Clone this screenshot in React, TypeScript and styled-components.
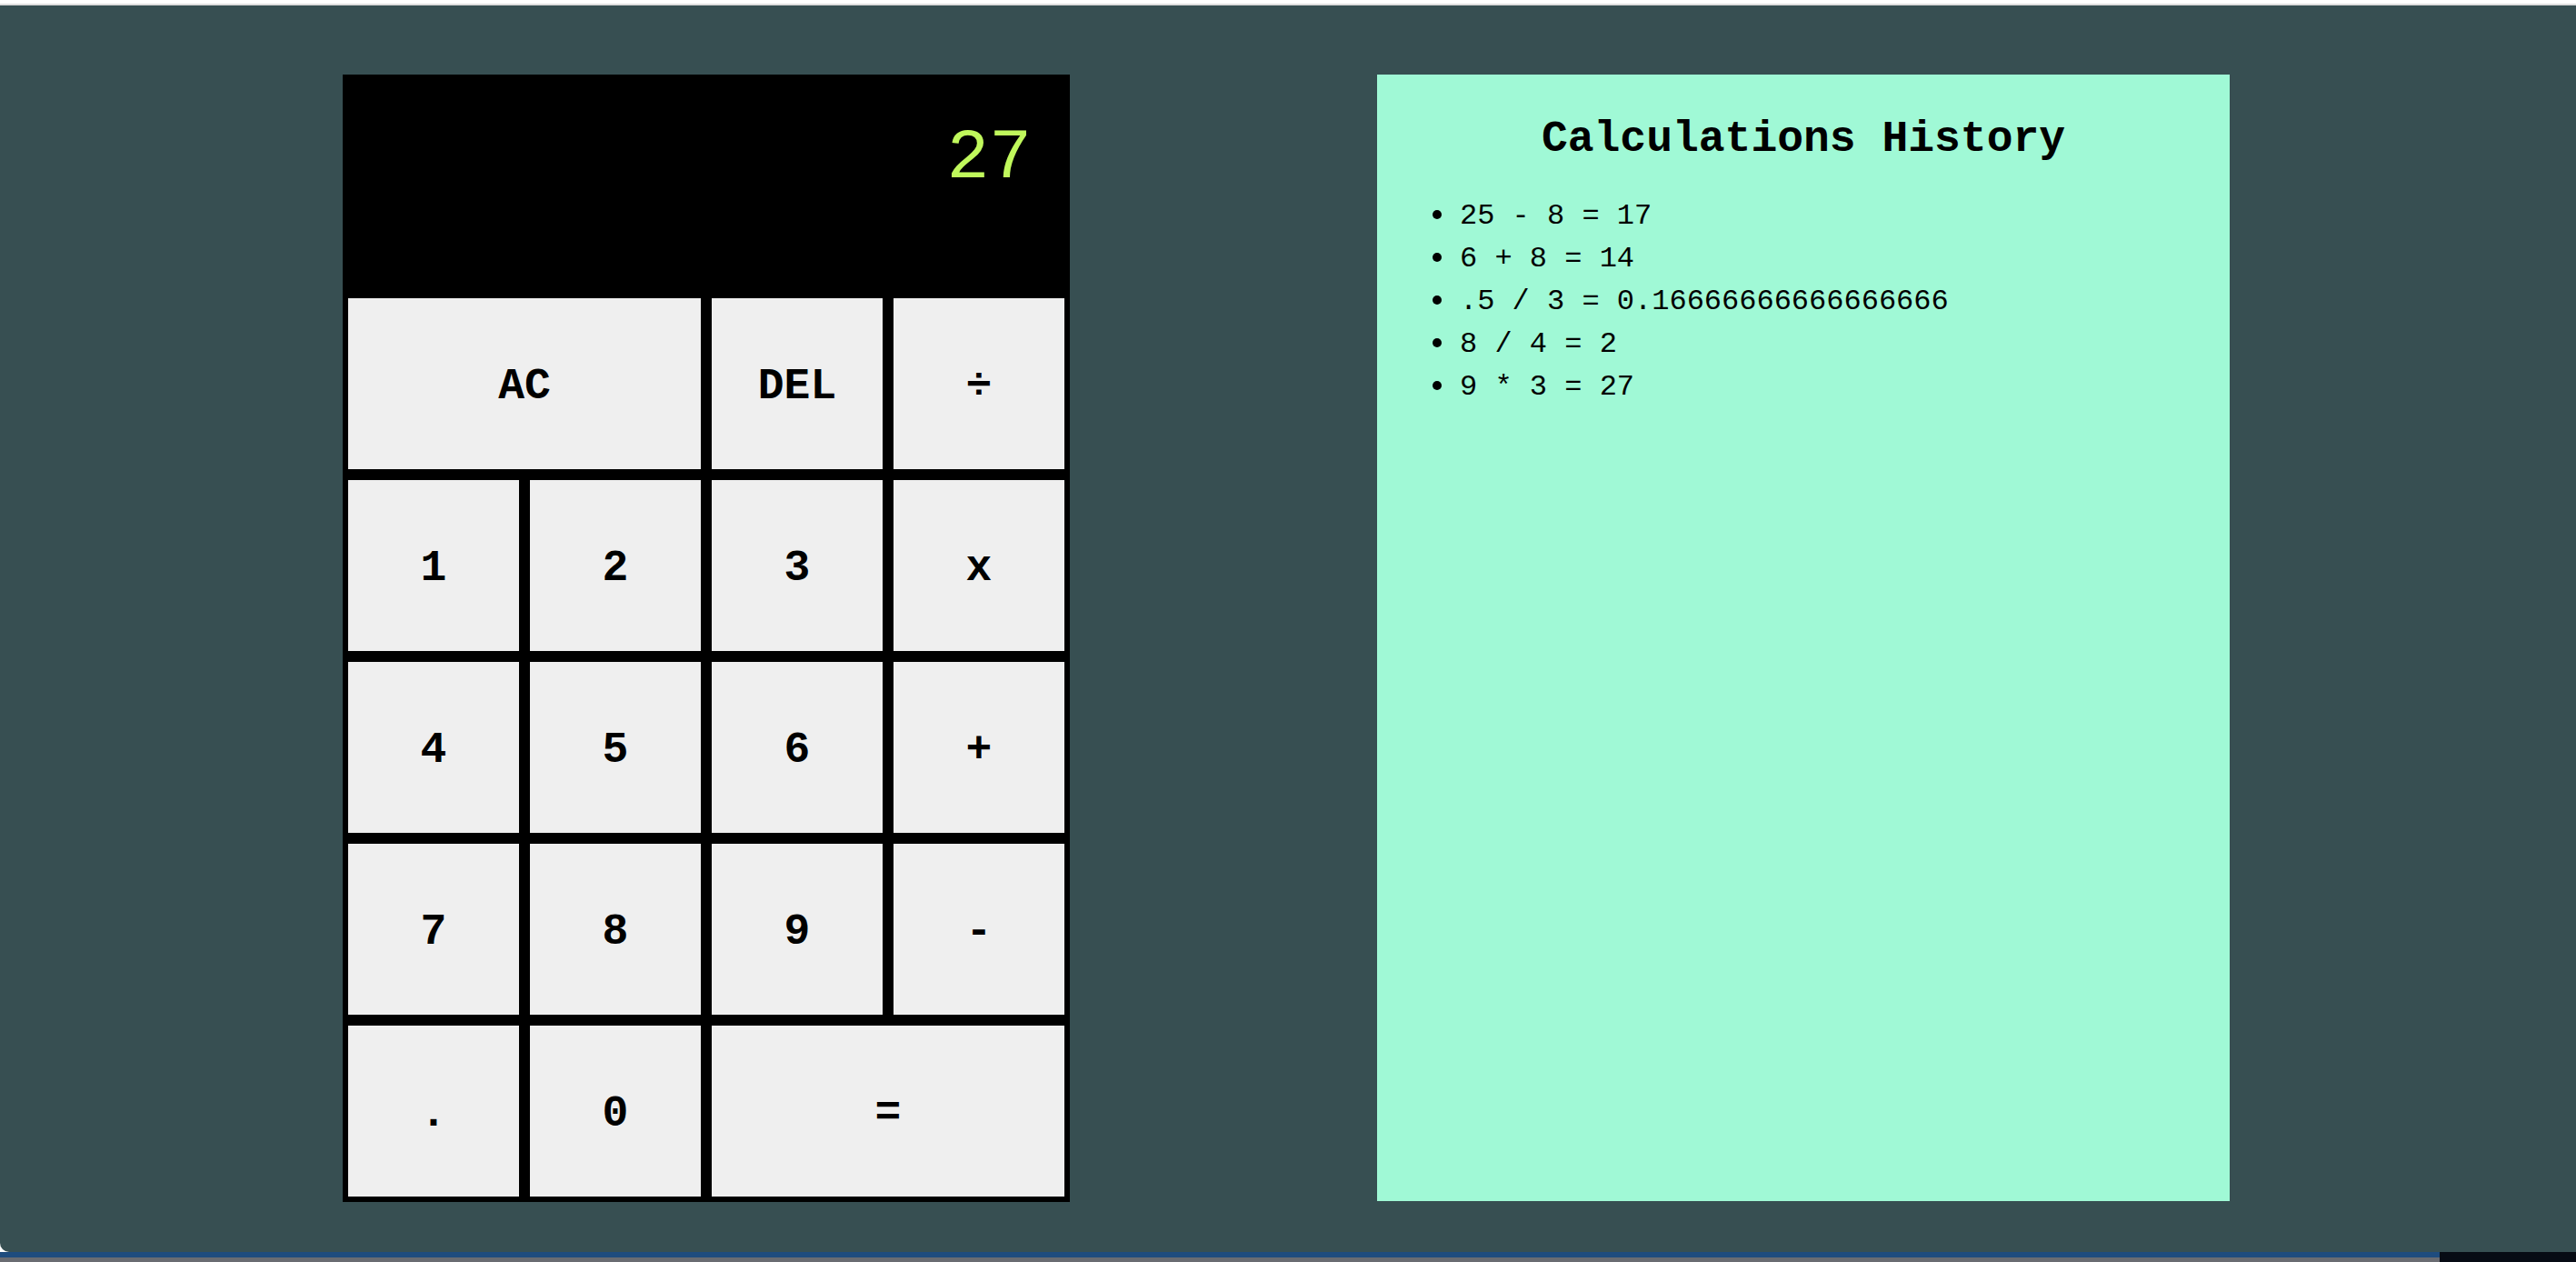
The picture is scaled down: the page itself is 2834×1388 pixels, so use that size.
import React from "react";
import styled, { createGlobalStyle } from "styled-components";

const GlobalStyle = createGlobalStyle`
  html, body {
    margin: 0;
    padding: 0;
    background: #ffffff;
    overflow: hidden;
  }
  * { box-sizing: border-box; }
`;

const Screen = styled.div`
  width: 2834px;
  height: 1388px;
  display: flex;
  flex-direction: column;
  padding-top: 4px;
  background: #ffffff;
`;

const Page = styled.main`
  flex: 0 0 1373px;
  display: flex;
  align-items: flex-start;
  gap: 338px;
  padding: 76px 0 0 377px;
  background: #374f52;
  border-top: 2px solid #dedede;
  border-bottom-left-radius: 10px;
`;

const Dock = styled.div`
  flex: 1;
  display: flex;
  flex-direction: column;
  background: #0a0f1a;
`;

const DockBlue = styled.div`
  height: 6px;
  display: flex;
`;

const BlueBar = styled.div`
  flex: 1;
  background: #1f4c7e;
`;

const DarkBar = styled.div`
  width: 150px;
  background: #070b14;
`;

const DockGray = styled.div`
  flex: 1;
  display: flex;
`;

const GrayBar = styled.div`
  flex: 1;
  background: #6a6c72;
`;

const Calculator = styled.div`
  display: grid;
  grid-template-columns: repeat(4, 200px);
  grid-template-rows: 240px repeat(5, 200px);
  background: #000000;
`;

const Display = styled.div`
  grid-column: 1 / -1;
  display: flex;
  justify-content: flex-end;
  align-items: flex-start;
  padding: 48px 42px 0 0;
  background: #000000;
  color: #c0f85c;
  font-family: "Liberation Mono", monospace;
  font-size: 78px;
  line-height: normal;
`;

const Key = styled.button<{ $span?: number }>`
  grid-column: span ${(p) => p.$span ?? 1};
  margin: 0;
  padding: 5px 0 0;
  border: 6px solid #000000;
  border-radius: 0;
  background: #efefef;
  color: #000000;
  font-family: "Liberation Mono", monospace;
  font-weight: 700;
  font-size: 48px;
  cursor: pointer;
`;

const HistoryPanel = styled.section`
  width: 938px;
  height: 1239px;
  display: flex;
  flex-direction: column;
  padding: 44px 0 0 61px;
  background: #a0f9d6;
  color: #000000;
`;

const Title = styled.h2`
  margin: 0 0 34px -61px;
  text-align: center;
  font-family: "Liberation Mono", monospace;
  font-weight: 700;
  font-size: 48px;
  line-height: normal;
`;

const List = styled.ul`
  margin: 0;
  padding: 0;
  list-style: none;
  display: flex;
  flex-direction: column;
`;

const Item = styled.li`
  display: flex;
  align-items: center;
  gap: 20px;
  font-family: "Liberation Mono", monospace;
  font-size: 32px;
  line-height: 47px;
  white-space: pre;
`;

const Dot = styled.span`
  width: 10px;
  height: 10px;
  border-radius: 50%;
  background: #000000;
  margin-top: -4px;
`;

const keys: { label: string; span?: number }[] = [
  { label: "AC", span: 2 },
  { label: "DEL" },
  { label: "÷" },
  { label: "1" },
  { label: "2" },
  { label: "3" },
  { label: "x" },
  { label: "4" },
  { label: "5" },
  { label: "6" },
  { label: "+" },
  { label: "7" },
  { label: "8" },
  { label: "9" },
  { label: "-" },
  { label: "." },
  { label: "0" },
  { label: "=", span: 2 },
];

const history = [
  "25 - 8 = 17",
  "6 + 8 = 14",
  ".5 / 3 = 0.16666666666666666",
  "8 / 4 = 2",
  "9 * 3 = 27",
];

export default function App() {
  return (
    <>
      <GlobalStyle />
      <Screen>
        <Page>
          <Calculator>
            <Display>27</Display>
            {keys.map((k) => (
              <Key key={k.label} $span={k.span}>
                {k.label}
              </Key>
            ))}
          </Calculator>
          <HistoryPanel>
            <Title>Calculations History</Title>
            <List>
              {history.map((h) => (
                <Item key={h}>
                  <Dot />
                  {h}
                </Item>
              ))}
            </List>
          </HistoryPanel>
        </Page>
        <Dock>
          <DockBlue>
            <BlueBar />
            <DarkBar />
          </DockBlue>
          <DockGray>
            <GrayBar />
            <DarkBar />
          </DockGray>
        </Dock>
      </Screen>
    </>
  );
}
